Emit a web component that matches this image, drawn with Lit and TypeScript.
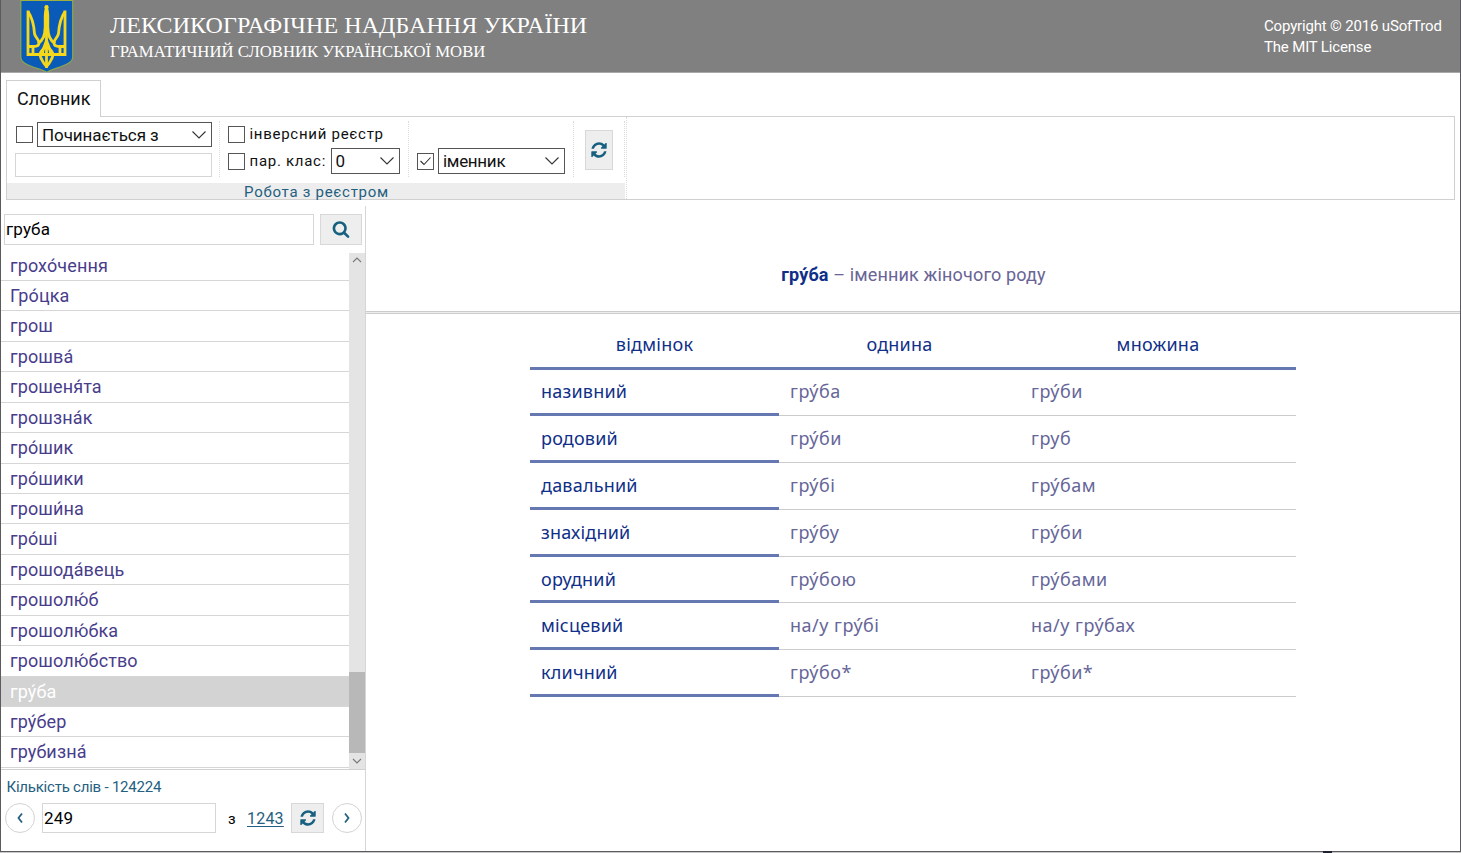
import { LitElement, html, css, svg } from "lit";
import { customElement } from "lit/decorators.js";
import { classMap } from "lit/directives/class-map.js";

const REFRESH = "M1639 1056q0 5-1 7-64 268-268 434.5t-478 166.5q-146 0-282.5-55t-243.5-157l-129 129q-19 19-45 19t-45-19-19-45v-448q0-26 19-45t45-19h448q26 0 45 19t19 45-19 45l-137 137q71 66 161 102t187 36q134 0 250-65t186-179q11-17 53-117 8-23 30-23h192q13 0 22.5 9.5t9.5 22.5zm25-800v448q0 26-19 45t-45 19h-448q-26 0-45-19t-19-45 19-45l138-138q-148-137-349-137-134 0-250 65t-186 179q-11 17-53 117-8 23-30 23h-199q-13 0-22.5-9.5t-9.5-22.5v-7q65-268 270-434.5t480-166.5q146 0 284 55.5t245 156.5l130-129q19-19 45-19t45 19 19 45z";
const SEARCH = "M1216 832q0-185-131.5-316.5t-316.5-131.5-316.5 131.5-131.5 316.5 131.5 316.5 316.5 131.5 316.5-131.5 131.5-316.5zm512 832q0 52-38 90t-90 38q-54 0-90-38l-343-342q-179 124-399 124-143 0-273.5-55.5t-225-150-150-225-55.5-273.5 55.5-273.5 150-225 225-150 273.5-55.5 273.5 55.5 225 150 150 225 55.5 273.5q0 220-124 399l343 343q37 37 37 90z";

const glyph = (d: string, size: number) => html`<svg width=${size} height=${size} viewBox="0 0 1792 1792" fill="#17607f"><path d=${d}></path></svg>`;
const chevron = (w: number, h: number, pts: string, color = "#333", sw = 1.1) =>
  html`<svg width=${w} height=${h} viewBox="0 0 ${w} ${h}" fill="none" stroke=${color} stroke-width=${sw}><polyline points=${pts}></polyline></svg>`;

const WORDS = ["грохо́чення", "Гро́цка", "грош", "грошва́", "грошеня́та", "грошзна́к", "гро́шик", "гро́шики", "гроши́на", "гро́ші", "грошода́вець", "грошолю́б", "грошолю́бка", "грошолю́бство", "гру́ба", "гру́бер", "грубизна́"];
const CASES: [string, string, string][] = [
  ["називний", "гру́ба", "гру́би"],
  ["родовий", "гру́би", "груб"],
  ["давальний", "гру́бі", "гру́бам"],
  ["знахідний", "гру́бу", "гру́би"],
  ["орудний", "гру́бою", "гру́бами"],
  ["місцевий", "на/у гру́бі", "на/у гру́бах"],
  ["кличний", "гру́бо*", "гру́би*"],
];

@customElement("app-header")
class AppHeader extends LitElement {
  static styles = css`
    :host { display: flex; height: 72px; background: #808080; border-bottom: 1px solid #a9a9a9; color: #fff; }
    .arms { margin-left: 19px; display: block; }
    .titles { margin-left: 36px; padding-top: 11px; font-family: "Liberation Serif", serif; white-space: nowrap; }
    .t1 { font-size: 24px; line-height: 28px; letter-spacing: .08px; }
    .t2 { font-size: 16.7px; line-height: 25px; }
    .legal { margin-left: auto; width: 196px; padding-top: 16px; font: 15px/21px Roboto, sans-serif; letter-spacing: -.17px; white-space: nowrap; }
  `;
  render() {
    const half = svg`
      <path d="M8 10.5V54.5H26.5"/>
      <path d="M8 11.5C12.5 18 14 26 14.5 33.5C15 38 19 38.5 19 43C19 45 17 46.5 13.5 46.5"/>
      <path d="M8 46.5H13V54"/>
      <path d="M26.5 8C24.5 12 25.4 18 25.2 27C24.9 36 23 40 18 43.5"/>
      <path d="M26.5 47C20 50 18.5 55 22 60Q23.5 63.5 26.5 66.5"/>
      <path d="M26.5 40C26 44 23 47 22.3 54"/>`;
    return html`
      <svg class="arms" width="54" height="72" viewBox="0 0 54 72">
        <path d="M.8-1H52.7V57.5C52.7 62 47 64.8 40 67C34 69 29 70.5 26.7 72.5C24.5 70.5 19 69 13 67C6 64.8 .8 62 .8 57.5Z" fill="#0a5bb8" stroke="#8da84a" stroke-width="1.2"></path>
        <path d="M.8 .5H52.7" stroke="#9fb040" stroke-width="1"></path>
        <g fill="none" stroke="#f5d81c" stroke-width="2.8">
          ${half}
          <g transform="translate(53 0) scale(-1 1)">${half}</g>
          <path d="M26.5 5.5V68" stroke-width="2.8"></path>
        </g>
        <circle cx="26.5" cy="7.2" r="2.1" fill="#f5d81c"></circle>
      </svg>
      <div class="titles">
        <div class="t1">ЛЕКСИКОГРАФІЧНЕ НАДБАННЯ УКРАЇНИ</div>
        <div class="t2">ГРАМАТИЧНИЙ СЛОВНИК УКРАЇНСЬКОЇ МОВИ</div>
      </div>
      <div class="legal">Copyright © 2016 uSofTrod<br />The MIT License</div>`;
  }
}

@customElement("app-ribbon")
class AppRibbon extends LitElement {
  static styles = css`
    :host { display: block; padding: 7px 5px 0; height: 126px; box-sizing: border-box; font-family: Roboto, sans-serif; color: #111; }
    * { box-sizing: border-box; }
    svg { display: block; }
    .tab { width: 95px; height: 37px; margin-bottom: -1px; position: relative; background: #fff; border: 1px solid #d0d0d0; border-bottom: 0; font-size: 18px; line-height: 36px; padding-left: 10px; letter-spacing: .05px; }
    .panel { width: 1449px; height: 84px; border: 1px solid #d0d0d0; display: flex; }
    .group { width: 620px; border-right: 1px dotted #ddd; padding-right: 1px; display: flex; flex-direction: column; }
    .tools { display: flex; height: 66px; padding: 4px 0 0 8px; }
    .caption { height: 16px; background: #ededed; color: #24607f; font-size: 15px; line-height: 18px; letter-spacing: .72px; text-align: center; white-space: nowrap; padding-left: 1px; }
    .cell { height: 56px; border-right: 1px dotted #dcdcdc; display: flex; flex-direction: column; white-space: nowrap; }
    .c1 { width: 205px; padding-top: 1px; gap: 6px; }
    .c2 { width: 189px; padding: 0 0 0 8px; gap: 1px; }
    .c3 { width: 165px; padding: 27px 0 0 8px; }
    .c4 { width: 51px; padding: 9px 0 0 11px; }
    .row { display: flex; align-items: center; gap: 4px; height: 26px; }
    .c1 .row { height: 25px; padding-left: 1px; }
    .c2 .row { gap: 4.5px; }
    .check { width: 17px; height: 17px; border: 1px solid #555; flex: none; display: grid; place-items: center; background: #fff; }
    .select { border: 1px solid #555; height: 26px; display: flex; align-items: center; justify-content: space-between; padding: 0 4px; font: 17px Roboto, sans-serif; background: #fff; }
    .s1 { width: 175px; height: 25px; letter-spacing: -.07px; }
    .s2 { width: 71px; margin-left: auto; margin-right: 8px; }
    .s3 { width: 127px; letter-spacing: -.3px; }
    .field { width: 197px; height: 25px; border: 1px solid #d6d6d6; padding: 0; margin: 0; }
    .label { font-size: 15px; letter-spacing: .72px; }
    .btn { width: 28px; height: 40px; border: 1px solid #d8d8d8; background: #eee; padding: 0 1px 1px 0; display: grid; place-items: center; }
  `;
  render() {
    const down = chevron(16, 10, "1.5,1.5 8,8 14.5,1.5");
    return html`
      <div class="tab">Словник</div>
      <div class="panel">
        <div class="group">
          <div class="tools">
            <div class="cell c1">
              <div class="row"><span class="check"></span><div class="select s1">Починається з${down}</div></div>
              <input class="field" />
            </div>
            <div class="cell c2">
              <div class="row"><span class="check"></span><span class="label">інверсний реєстр</span></div>
              <div class="row"><span class="check"></span><span class="label">пар. клас:</span><div class="select s2">0${down}</div></div>
            </div>
            <div class="cell c3">
              <div class="row"><span class="check">${chevron(13, 10, "1.5,5 5,8.5 11.5,1.5")}</span><div class="select s3">іменник${down}</div></div>
            </div>
            <div class="cell c4"><button class="btn">${glyph(REFRESH, 18)}</button></div>
          </div>
          <div class="caption">Робота з реєстром</div>
        </div>
      </div>`;
  }
}

@customElement("word-list")
class WordList extends LitElement {
  static styles = css`
    :host { display: flex; flex-direction: column; width: 365px; box-sizing: border-box; border-right: 1px solid #d6d6d6; font-family: Roboto, sans-serif; }
    * { box-sizing: border-box; }
    svg { display: block; }
    .search { display: flex; padding: 8px 3px 0; gap: 6px; height: 44px; }
    .input { border: 1px solid #d6d6d6; margin: 0; padding: 0 1px; font: 17px Roboto, sans-serif; color: #000; }
    .query { width: 310px; height: 31px; padding-bottom: 2px; letter-spacing: .15px; }
    .btn { border: 1px solid #d8d8d8; background: #eee; padding: 0; display: grid; place-items: center; }
    .find { width: 42px; height: 31px; padding-bottom: 1px; }
    .box { display: flex; height: 520px; border-bottom: 1px solid #d0d0d0; }
    .words { flex: 1; height: 519px; overflow: hidden; padding-top: .6px; }
    .word { height: 30.43px; border-bottom: 1px solid #d6d6d6; padding-left: 9px; font-size: 18px; line-height: 29.43px; letter-spacing: .12px; color: #483d8b; }
    .active { background: #d3d3d3; color: #fff; }
    .bar { width: 16px; height: 516px; margin-top: 3px; background: #e4e4e4; display: flex; flex-direction: column; align-items: center; justify-content: space-between; padding: 4px 0 5px; }
    .thumb { width: 16px; height: 81px; margin: auto 0 5px; background: #b8b8b8; }
    .count { padding: 7px 0 0 5.5px; font-size: 15px; line-height: 20px; height: 33px; letter-spacing: -.22px; color: #24607f; }
    .pager { display: flex; align-items: center; height: 30px; padding-left: 4px; }
    .round { width: 30px; height: 30px; border-radius: 50%; border: 1px solid #d3d3d3; background: #fff; padding: 0; display: grid; place-items: center; }
    .page { width: 174px; height: 30px; margin-left: 7px; letter-spacing: .2px; }
    .of { width: 19px; margin-left: 12px; font-size: 15px; padding-top: 2px; }
    .total { width: 37px; margin-right: 7px; font-size: 16px; letter-spacing: .2px; color: #24607f; text-decoration: underline; text-underline-offset: 2px; }
    .reload { width: 33px; height: 30px; margin-right: 8px; }
  `;
  render() {
    return html`
      <div class="search"><input class="input query" .value=${"груба"} /><button class="btn find">${glyph(SEARCH, 18)}</button></div>
      <div class="box">
        <div class="words">${WORDS.map((w, i) => html`<div class=${classMap({ word: true, active: i === 14 })}>${w}</div>`)}</div>
        <div class="bar">${chevron(10, 6, "1,5 5,1 9,5", "#777")}<div class="thumb"></div>${chevron(10, 6, "1,1 5,5 9,1", "#777")}</div>
      </div>
      <div class="count">Кількість слів - 124224</div>
      <div class="pager">
        <button class="round">${chevron(8, 12, "6,1.5 2.5,6 6,10.5", "#24607f", 1.8)}</button>
        <input class="input page" .value=${"249"} />
        <span class="of">з</span><a class="total">1243</a>
        <button class="btn reload">${glyph(REFRESH, 18)}</button>
        <button class="round">${chevron(8, 12, "2,1.5 5.5,6 2,10.5", "#24607f", 1.8)}</button>
      </div>`;
  }
}

@customElement("word-forms")
class WordForms extends LitElement {
  static styles = css`
    :host { display: block; flex: 1; }
    * { box-sizing: border-box; }
    .head { height: 109px; margin-top: -1px; border-bottom: 3px double #ccc; background: linear-gradient(#eee, #eee) bottom / 100% 3px no-repeat border-box; text-align: center; padding: 58px 0 0 1px; font: 18px/24px Roboto, sans-serif; letter-spacing: .15px; color: #6a6496; }
    .lemma { color: #0f2f88; font-weight: 700; }
    .forms { width: 766px; margin: 8px 0 0 164px; font: 18px/44px "Noto Sans", "Open Sans", sans-serif; letter-spacing: .5px; color: #669; }
    .row { display: grid; grid-template-columns: 249px 241px 276px; height: 46.83px; }
    .titles { height: 48px; margin-bottom: -.8px; border-bottom: 3px solid #6678b1; text-align: center; line-height: 44px; letter-spacing: .25px; color: #0f2f88; }
    .cell { padding-left: 11px; border-bottom: 1px solid #ccc; height: 46.83px; }
    .titles .cell { padding: 0; border: 0; height: 44px; }
    .name { color: #0f2f88; border-bottom: 3px solid #6678b1; letter-spacing: .2px; }
  `;
  render() {
    return html`
      <div class="head"><span class="lemma">гру́ба</span> – іменник жіночого роду</div>
      <div class="forms">
        <div class="row titles"><div class="cell">відмінок</div><div class="cell">однина</div><div class="cell">множина</div></div>
        ${CASES.map(([n, a, b]) => html`<div class="row"><div class="cell name">${n}</div><div class="cell">${a}</div><div class="cell">${b}</div></div>`)}
      </div>`;
  }
}

@customElement("app-root")
class AppRoot extends LitElement {
  static styles = css`
    :host { display: block; width: 1461px; height: 853px; background: #c8c8c8; overflow: hidden; position: relative; }
    .window { box-sizing: border-box; width: 1461px; height: 852px; border: 1px solid #5a5a60; border-top: 0; background: #fff; display: flex; flex-direction: column; }
    .body { flex: 1; display: flex; margin-top: 7px; }
    .notch { position: absolute; right: 129px; bottom: 0; width: 9px; height: 2px; background: #1c2030; }
  `;
  render() {
    return html`<div class="window"><app-header></app-header><app-ribbon></app-ribbon><div class="body"><word-list></word-list><word-forms></word-forms></div></div><div class="notch"></div>`;
  }
}
